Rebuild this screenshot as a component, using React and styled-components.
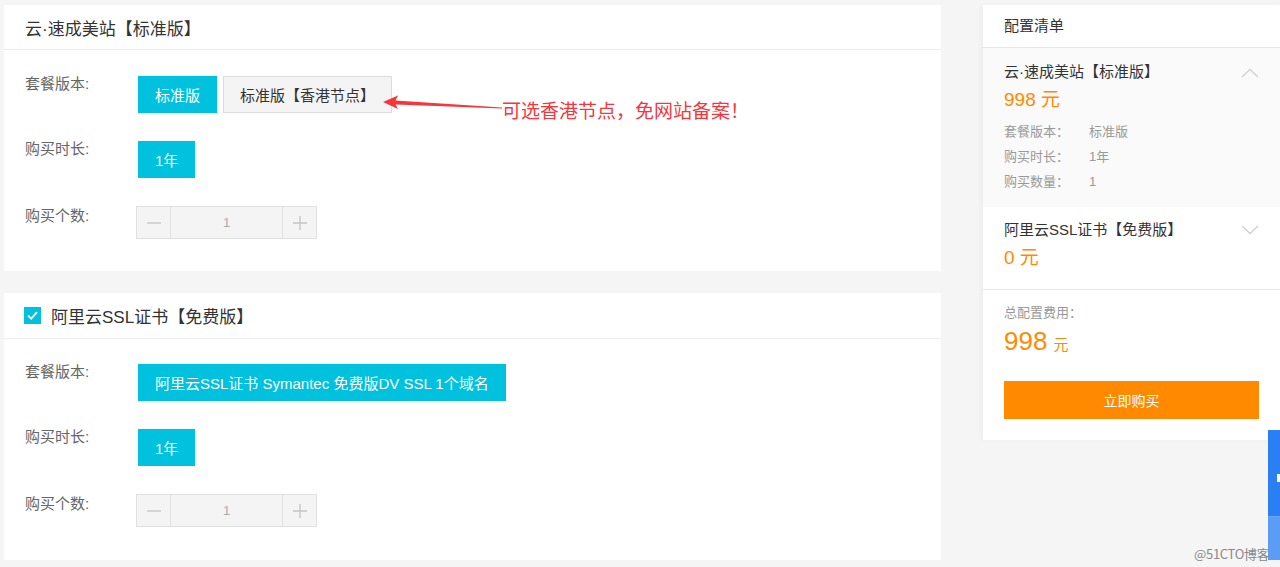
import React from "react";
import styled, { createGlobalStyle } from "styled-components";

const Global = createGlobalStyle`
  html, body { margin: 0; padding: 0; }
  body {
    background: #f5f5f5;
    font-family: "Liberation Sans", "Noto Sans CJK SC", sans-serif;
    width: 1280px;
    height: 567px;
    overflow: hidden;
  }
`;

const Page = styled.div`
  position: relative;
  display: flex;
  align-items: flex-start;
  padding: 5px 0 0 4px;
  height: 562px;
  box-sizing: border-box;
`;

const LeftCol = styled.div`
  width: 937px;
  display: flex;
  flex-direction: column;
  gap: 22px;
`;

const Card = styled.section`
  position: relative;
  background: #fff;
`;

const CardHead = styled.div`
  height: ${(p) => p.$h}px;
  border-bottom: 1px solid #ececec;
  display: flex;
  align-items: center;
  gap: 10px;
  padding-left: ${(p) => p.$pl || 21}px;
  font-size: 17px;
  color: #333;
`;

const CardBody = styled.div`
  padding: ${(p) => p.$pt}px 0 ${(p) => p.$pb}px 21px;
  display: flex;
  flex-direction: column;
  gap: 28px;
`;

const Row = styled.div`
  display: flex;
  align-items: flex-start;
`;

const Label = styled.div`
  width: 113px;
  flex: none;
  font-size: 15px;
  line-height: 16px;
  color: #666;
  padding-top: ${(p) => p.$pt || 0}px;
`;

const Options = styled.div`
  display: flex;
  gap: 6px;
`;

const Opt = styled.div`
  height: 37px;
  box-sizing: border-box;
  padding: 0 16px;
  display: flex;
  align-items: center;
  font-size: 15px;
  white-space: nowrap;
  background: ${(p) => (p.$active ? "#00c1de" : "#f4f4f4")};
  color: ${(p) => (p.$active ? "#fff" : "#333")};
  border: 1px solid ${(p) => (p.$active ? "#00c1de" : "#dcdcdc")};
`;

const Stepper = styled.div`
  margin-left: -2px;
  display: flex;
  width: 181px;
  height: 33px;
  box-sizing: border-box;
  border: 1px solid #e1e1e1;
  background: #f4f4f4;
`;

const StepBtn = styled.div`
  width: 33px;
  flex: none;
  display: flex;
  align-items: center;
  justify-content: center;
  border-${(p) => p.$side}: 1px solid #e1e1e1;
`;

const StepVal = styled.div`
  flex: 1;
  display: flex;
  align-items: center;
  justify-content: center;
  font-size: 13px;
  color: #aaa;
`;

const Check = styled.span`
  width: 17px;
  height: 17px;
  background: #00c1de;
  display: inline-flex;
  align-items: center;
  justify-content: center;
`;

const Note = styled.div`
  position: absolute;
  left: 370px;
  top: 82px;
  display: flex;
  align-items: flex-start;
`;

const NoteText = styled.span`
  font-size: 19px;
  line-height: 24px;
  color: #f5363d;
  margin-left: 0;
  margin-top: 11px;
  font-family: "Noto Sans CJK SC", sans-serif;
`;

const Panel = styled.aside`
  margin-left: 42px;
  width: 297px;
  background: #fff;
  box-shadow: -2px 0 4px rgba(0, 0, 0, 0.04);
`;

const PanelHead = styled.div`
  height: 42px;
  line-height: 42px;
  padding-left: 21px;
  font-size: 15px;
  color: #333;
  border-bottom: 1px solid #e8e8e8;
`;

const Item = styled.div`
  position: relative;
  background: ${(p) => (p.$open ? "#fafafa" : "#fff")};
  padding: ${(p) => p.$pt}px 21px ${(p) => p.$pb}px;
  border-bottom: ${(p) => (p.$border ? "1px solid #e8e8e8" : "none")};
`;

const ItemTitle = styled.div`
  font-size: 15px;
  line-height: 20px;
  color: #333;
`;

const Price = styled.div`
  margin-top: 5px;
  font-size: 19px;
  line-height: 26px;
  color: #ff8a00;
`;

const Details = styled.div`
  margin-top: 6px;
`;

const DetailRow = styled.div`
  display: flex;
  font-size: 13px;
  line-height: 25px;
  color: #999;
`;

const DetailKey = styled.span`
  width: 85px;
  flex: none;
`;

const Chevron = styled.svg`
  position: absolute;
  right: 21px;
  top: ${(p) => p.$top}px;
`;

const Total = styled.div`
  padding: 15px 21px 21px;
`;

const TotalLabel = styled.div`
  font-size: 13px;
  line-height: 16px;
  color: #999;
`;

const TotalPrice = styled.div`
  margin-top: 6px;
  line-height: 28px;
  color: #ff8a00;
  font-size: 26px;
  display: flex;
  align-items: baseline;
  gap: 6px;
`;

const Unit = styled.span`
  font-size: 15px;
`;

const BuyBtn = styled.div`
  margin-top: 22px;
  height: 38px;
  background: #ff8a00;
  color: #fff;
  font-size: 14px;
  display: flex;
  align-items: center;
  justify-content: center;
`;

const SideTab = styled.div`
  position: absolute;
  left: 1268px;
  top: 430px;
  width: 12px;
  height: 130px;
  background: #2a7ff3;
  display: flex;
  flex-direction: column;
  align-items: flex-end;
`;

const TabMark = styled.div`
  margin-top: ${(p) => p.$mt}px;
  width: ${(p) => p.$w}px;
  height: ${(p) => p.$h}px;
  background: ${(p) => p.$c};
`;

const Watermark = styled.div`
  position: absolute;
  left: 1194px;
  top: 544px;
  font-size: 13px;
  color: #8a8a8a;
  font-family: "Noto Sans CJK SC", sans-serif;
  letter-spacing: -0.3px;
`;

function Stepbox() {
  return (
    <Stepper>
      <StepBtn $side="right">
        <svg width="16" height="16" viewBox="0 0 16 16">
          <path d="M1 8 H15" stroke="#c4c4c4" strokeWidth="1.3" />
        </svg>
      </StepBtn>
      <StepVal>1</StepVal>
      <StepBtn $side="left">
        <svg width="16" height="16" viewBox="0 0 16 16">
          <path d="M1 8 H15 M8 1 V15" stroke="#c4c4c4" strokeWidth="1.3" />
        </svg>
      </StepBtn>
    </Stepper>
  );
}

export default function App() {
  return (
    <>
      <Global />
      <Page>
        <LeftCol>
          <Card>
            <CardHead $h={44}>云·速成美站【标准版】</CardHead>
            <CardBody $pt={26} $pb={32}>
              <Row>
                <Label>套餐版本:</Label>
                <Options>
                  <Opt $active>标准版</Opt>
                  <Opt>标准版【香港节点】</Opt>
                </Options>
              </Row>
              <Row>
                <Label>购买时长:</Label>
                <Opt $active>1年</Opt>
              </Row>
              <Row>
                <Label $pt={2}>购买个数:</Label>
                <Stepbox />
              </Row>
            </CardBody>
            <Note>
              <svg width="128" height="30" viewBox="0 0 128 30">
                <path d="M9 15 L24 8.5 L21.5 13.5 L128 20.5 L128 21.6 L21.5 17.5 L24 22 Z" fill="#f5363d" />
              </svg>
              <NoteText>可选香港节点，免网站备案！</NoteText>
            </Note>
          </Card>
          <Card>
            <CardHead $h={45} $pl={20}>
              <Check>
                <svg width="13" height="13" viewBox="0 0 13 13">
                  <path d="M2 6.5 L5.2 9.6 L11 3.2" stroke="#fff" strokeWidth="1.8" fill="none" />
                </svg>
              </Check>
              阿里云SSL证书【免费版】
            </CardHead>
            <CardBody $pt={25} $pb={33}>
              <Row>
                <Label>套餐版本:</Label>
                <Opt $active>阿里云SSL证书 Symantec 免费版DV SSL 1个域名</Opt>
              </Row>
              <Row>
                <Label>购买时长:</Label>
                <Opt $active>1年</Opt>
              </Row>
              <Row>
                <Label $pt={2}>购买个数:</Label>
                <Stepbox />
              </Row>
            </CardBody>
          </Card>
        </LeftCol>
        <Panel>
          <PanelHead>配置清单</PanelHead>
          <Item $open $pt={14} $pb={13}>
            <ItemTitle>云·速成美站【标准版】</ItemTitle>
            <Chevron $top={20} width="18" height="10" viewBox="0 0 18 10">
              <path d="M1 9 L9 1.5 L17 9" stroke="#d0d0d0" strokeWidth="1.3" fill="none" />
            </Chevron>
            <Price>998 元</Price>
            <Details>
              <DetailRow><DetailKey>套餐版本：</DetailKey>标准版</DetailRow>
              <DetailRow><DetailKey>购买时长：</DetailKey>1年</DetailRow>
              <DetailRow><DetailKey>购买数量：</DetailKey>1</DetailRow>
            </Details>
          </Item>
          <Item $border $pt={13} $pb={18}>
            <ItemTitle>阿里云SSL证书【免费版】</ItemTitle>
            <Chevron $top={18} width="18" height="10" viewBox="0 0 18 10">
              <path d="M1 1 L9 8.5 L17 1" stroke="#d0d0d0" strokeWidth="1.3" fill="none" />
            </Chevron>
            <Price>0 元</Price>
          </Item>
          <Total>
            <TotalLabel>总配置费用：</TotalLabel>
            <TotalPrice>998<Unit>元</Unit></TotalPrice>
            <BuyBtn>立即购买</BuyBtn>
          </Total>
        </Panel>
        <SideTab>
          <TabMark $mt={44} $w={3} $h={8} $c="#fff" />
          <TabMark $mt={34} $w={12} $h={1} $c="#6aa6f7" />
          <TabMark $mt={0} $w={12} $h={44} $c="#5b9cf5" />
        </SideTab>
        <Watermark>@51CTO博客</Watermark>
      </Page>
    </>
  );
}
